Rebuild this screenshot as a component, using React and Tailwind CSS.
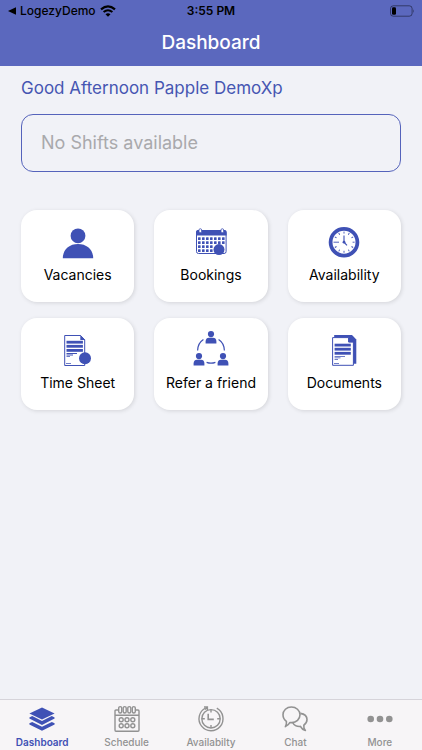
import React, { useState } from "react";

const VacanciesIcon = () => (
  <svg viewBox="0 0 36 36" className="w-9 h-9" fill="#3f51b5" aria-hidden="true">
    <circle cx="18" cy="12.8" r="7.4" />
    <path d="M2.8 35.2C2.8 26.8 9 21 18 21S33.2 26.8 33.2 35.2Z" />
  </svg>
);

const BookingsIcon = () => (
  <svg viewBox="0 0 36 36" className="w-9 h-9" fill="#3f51b5" aria-hidden="true">
    <rect x="3.5" y="7.5" width="29.6" height="23" rx="2" fill="none" stroke="#3f51b5" strokeWidth="1" />
    <path d="M3 9Q3 7 5 7H31.6Q33.6 7 33.6 9V12.6H3Z" />
    {[7.3, 29.3].map((x) => (
      <rect key={x} x={x - 1.3} y="5.7" width="2.6" height="4" rx="1.3" fill="#fff" stroke="#3f51b5" strokeWidth="0.8" />
    ))}
    {[15.6, 19.6, 23.6, 27.6].map((y) =>
      [6.3, 10.3, 14.3, 18.3, 22.3, 26.3, 30.3]
        .filter((x) => y < 22 || x < 20)
        .map((x) => (
          <rect key={`${x}-${y}`} x={x - 1.3} y={y - 1.3} width="2.6" height="2.6" rx="0.5" />
        ))
    )}
    <circle cx="26" cy="26.6" r="5.5" />
  </svg>
);

const ClockIcon = () => (
  <svg viewBox="0 0 36 36" className="w-9 h-9" fill="none" stroke="#3f51b5" aria-hidden="true">
    <circle cx="18" cy="19.2" r="13.4" strokeWidth="3.8" />
    {[0, 30, 60, 90, 120, 150, 180, 210, 240, 300, 330].map((deg) => (
      <path key={deg} d="M18 8.6V10.6" strokeWidth="0.9" transform={`rotate(${deg} 18 19.2)`} />
    ))}
    <path d="M7.5 19.2H13" strokeWidth="0.9" />
    <path d="M18 12.6V19.2L21 22.4" strokeWidth="1.1" />
    <circle cx="18" cy="19.2" r="1.4" fill="#3f51b5" stroke="none" />
  </svg>
);

const TimeSheetIcon = () => (
  <svg viewBox="0 0 36 36" className="w-9 h-9" fill="#3f51b5" aria-hidden="true">
    <path d="M4.7 4.5H20.5L24.7 8.8V34.5H4.7Z" fill="#fff" stroke="#3f51b5" strokeWidth="1" />
    <path d="M20.3 4.1L25.2 9.1H20.3Z" />
    <rect x="6.5" y="9.8" width="16.4" height="2.8" />
    <rect x="6.5" y="13.9" width="16.4" height="2.8" />
    <rect x="6.5" y="18" width="16.4" height="2.8" />
    <path d="M6.5 21.9H17V22.9H6.5ZM6.5 23.6H13V24.6H6.5ZM6.5 25.3H10V26.1H6.5ZM6 32.3H11V33H6Z" />
    <circle cx="25" cy="27.2" r="6" />
  </svg>
);

const ReferIcon = () => (
  <svg viewBox="0 0 36 36" className="w-9 h-9" fill="#3f51b5" aria-hidden="true">
    {[
      [18, 3.1],
      [6, 25.1],
      [30, 25.1],
    ].map(([x, y]) => (
      <g key={`${x}-${y}`}>
        <circle cx={x} cy={y} r="3.1" />
        <path d={`M${x - 5.4} ${y + 9.5}V${y + 7.4}Q${x - 5.4} ${y + 3.9} ${x - 2} ${y + 3.7}H${x + 2}Q${x + 5.4} ${y + 3.9} ${x + 5.4} ${y + 7.4}V${y + 9.5}Z`} />
      </g>
    ))}
    <path
      d="M10.4 8.6Q4.8 12.2 4.6 19.6M25.6 8.6Q31.2 12.2 31.4 19.6M13.6 31.4Q18 33 22.4 31.4"
      fill="none"
      stroke="#3f51b5"
      strokeWidth="1.2"
    />
  </svg>
);

const DocumentsIcon = () => (
  <svg viewBox="0 0 36 36" className="w-9 h-9" fill="#3f51b5" aria-hidden="true">
    <path d="M8.2 4.1H26L30.3 8.4V32.8H8.2Z" />
    <path d="M6.6 6.6H22.6V11H27.4V34.3H6.6Z" fill="#fff" stroke="#3f51b5" strokeWidth="1" />
    <path d="M22.6 6.1L27.8 11.3H22.6Z" />
    <rect x="8.6" y="12.7" width="16.2" height="2.8" />
    <rect x="8.6" y="16.8" width="16.2" height="2.8" />
    <rect x="8.6" y="20.9" width="16.2" height="2.8" />
    <path d="M8.6 24.9H19V25.7H8.6ZM8.6 26.5H14.5V27.3H8.6ZM8.6 28H12V28.7H8.6ZM8 32.2H13V32.9H8Z" />
  </svg>
);

const LayersTabIcon = () => (
  <svg viewBox="0 0 28 28" className="w-7 h-7" fill="currentColor" aria-hidden="true">
    <path d="M14 2.6L26.6 8.6L14 14.6L1.4 8.6Z" />
    <path d="M1.4 12.4L4.2 11.1L14 15.9L23.8 11.1L26.6 12.4V13.6L14 20L1.4 13.6Z" />
    <path d="M1.4 18.2L4.2 16.9L14 21.7L23.8 16.9L26.6 18.2V19.4L14 25.8L1.4 19.4Z" />
  </svg>
);

const CalendarTabIcon = () => (
  <svg viewBox="0 0 28 28" className="w-7 h-7" fill="none" stroke="currentColor" strokeWidth="1.4" aria-hidden="true">
    <path d="M5.2 5H3Q2 5 2 6V25Q2 26.2 3 26.2H25Q26 26.2 26 25V6Q26 5 25 5H22.8M2 10.2H26" />
    {[7.2, 11.7, 16.3, 20.8].map((x) => (
      <rect key={x} x={x - 1.5} y="1.6" width="3" height="6.4" rx="1.5" />
    ))}
    {[14.8, 20.8].map((y) =>
      [8.2, 14, 19.8].map((x) => <circle key={`${x}-${y}`} cx={x} cy={y} r="2" />)
    )}
  </svg>
);

const StopwatchTabIcon = () => (
  <svg viewBox="0 0 28 28" className="w-7 h-7" fill="none" stroke="currentColor" strokeWidth="1.4" aria-hidden="true">
    <path d="M8.6 3A12 12 0 1 0 19.8 3.2" />
    <path d="M7 2H10.4V5.2M8 4.6L10.6 2" />
    <circle cx="14" cy="13.8" r="9.2" />
    <path d="M14 4.6V7.6M14 20V23M4.8 13.8H7.8M20.2 13.8H23.2" />
    <path d="M11.2 8.8V14.4H16.8" strokeWidth="1.6" />
  </svg>
);

const ChatTabIcon = () => (
  <svg viewBox="0 0 28 28" className="w-7 h-7" fill="none" stroke="currentColor" strokeWidth="1.6" strokeLinejoin="round" aria-hidden="true">
    <path d="M10.4 2C15.2 2 19 5.4 19 9.8S15.2 17.6 10.8 17.6L8.8 17.5Q7.6 20.4 4.4 21.6Q5.8 19.2 5.4 16.4Q2 14 2 9.8C2 5.4 5.6 2 10.4 2Z" />
    <path d="M19.4 8.4Q26 9.4 26 14.6Q26 18.2 22.8 20.2Q22.4 23 24.4 25.4Q20.8 24.4 19.4 21.4Q14.2 21.8 11.8 17.8" />
  </svg>
);

const MoreTabIcon = () => (
  <svg viewBox="0 0 28 28" className="w-7 h-7" fill="currentColor" aria-hidden="true">
    <circle cx="4.7" cy="14" r="3.3" />
    <circle cx="14" cy="14" r="3.3" />
    <circle cx="23.3" cy="14" r="3.3" />
  </svg>
);

const menuItems = [
  { label: "Vacancies", icon: <VacanciesIcon /> },
  { label: "Bookings", icon: <BookingsIcon /> },
  { label: "Availability", icon: <ClockIcon /> },
  { label: "Time Sheet", icon: <TimeSheetIcon /> },
  { label: "Refer a friend", icon: <ReferIcon /> },
  { label: "Documents", icon: <DocumentsIcon /> },
];

const tabs = [
  { label: "Dashboard", icon: <LayersTabIcon /> },
  { label: "Schedule", icon: <CalendarTabIcon /> },
  { label: "Availabilty", icon: <StopwatchTabIcon /> },
  { label: "Chat", icon: <ChatTabIcon /> },
  { label: "More", icon: <MoreTabIcon /> },
];

const StatusBar = () => (
  <div className="grid grid-cols-3 items-center h-[22px] px-2 text-black text-xs">
    <div className="flex items-center gap-1 font-medium">
      <svg viewBox="0 0 8 8" className="w-2 h-2" aria-hidden="true">
        <path d="M0 4L8 0.3V7.7Z" />
      </svg>
      <span>LogezyDemo</span>
      <svg viewBox="0 0 16 12" className="w-4 h-3" fill="none" stroke="#000" aria-hidden="true">
        <path d="M1 4.4Q8 -1.8 15 4.4" strokeWidth="2.2" />
        <path d="M3.6 7.1Q8 3.3 12.4 7.1" strokeWidth="2" />
        <path d="M8 11.8L5.5 9.2Q8 7.3 10.5 9.2Z" fill="#000" stroke="none" />
      </svg>
    </div>
    <span className="text-center font-semibold">3:55 PM</span>
    <svg viewBox="0 0 25 12" className="w-[25px] h-3 justify-self-end" aria-hidden="true">
      <rect x="1.5" y="0.8" width="21.6" height="10.4" rx="2.8" fill="none" stroke="#000" strokeOpacity="0.45" />
      <rect x="3" y="2.3" width="4" height="7.4" rx="1.3" />
      <path d="M24 4.2Q25.3 6 24 7.8Z" fillOpacity="0.5" />
    </svg>
  </div>
);

const App = () => {
  const [activeTab, setActiveTab] = useState("Dashboard");

  return (
    <div className="min-h-screen flex flex-col bg-[#f1f2f7] font-[Inter,sans-serif]">
      <header className="bg-[#5b68be]">
        <StatusBar />
        <h1 className="h-11 pb-0.5 flex items-center justify-center text-[19px] font-medium text-white">
          Dashboard
        </h1>
      </header>

      <main className="flex-1 px-[21px] pt-2">
        <h2 className="text-[17px] leading-7 text-[#4656b2]">
          Good Afternoon Papple DemoXp
        </h2>
        <div className="mt-3 h-[58px] px-[19px] flex items-center border border-[#5563bb] rounded-xl">
          <p className="text-lg text-[#a9a9ac]">No Shifts available</p>
        </div>

        <div className="mt-[38px] grid grid-cols-3 gap-x-5 gap-y-4">
          {menuItems.map((item) => (
            <button
              key={item.label}
              type="button"
              className="h-[92px] pt-[13px] flex flex-col items-center gap-1 bg-white rounded-2xl shadow-[1px_1px_4px_rgba(0,0,0,0.12)]"
            >
              {item.icon}
              <span className="text-sm leading-6 text-black whitespace-nowrap">
                {item.label}
              </span>
            </button>
          ))}
        </div>
      </main>

      <nav className="flex h-[51px] pt-[5px] bg-[#f7f5f7] border-t border-[#d6d4da]">
        {tabs.map((tab) => (
          <button
            key={tab.label}
            type="button"
            onClick={() => setActiveTab(tab.label)}
            className={`flex-1 flex flex-col items-center gap-[3px] ${
              activeTab === tab.label
                ? "text-[#3f51b5] font-semibold"
                : "text-[#929292] font-medium"
            }`}
          >
            {tab.icon}
            <span className="text-[10px] leading-3">{tab.label}</span>
          </button>
        ))}
      </nav>
    </div>
  );
};

export default App;
